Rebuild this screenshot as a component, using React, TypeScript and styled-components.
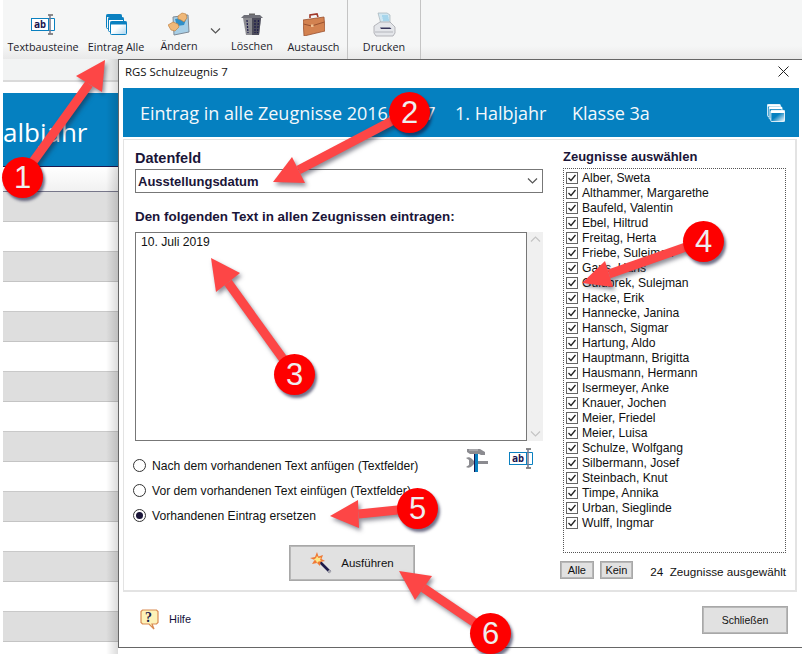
import React from 'react'
import styled, { createGlobalStyle } from 'styled-components'

const GlobalStyle = createGlobalStyle`
	html, body { margin: 0; padding: 0; background: #fff; }
	* { box-sizing: border-box; }
`

const Page = styled.div`
	position: relative;
	width: 802px;
	height: 654px;
	overflow: hidden;
	display: flex;
	flex-direction: column;
	background: #fff;
	color: #111;
	font-family: 'Liberation Sans', Arial, sans-serif;
	font-size: 12.15px;
`

/* toolbar */
const Toolbar = styled.div`
	height: 59px;
	margin-left: 3px;
	flex: none;
	display: flex;
	padding-left: 3px;
	background: linear-gradient(#f5f6f6 0, #f5f6f6 46px, #e9e9e9 59px);
`
const Tool = styled.div<{ $w: number; $sep?: boolean }>`
	width: ${p => p.$w}px;
	flex: none;
	display: flex;
	flex-direction: column;
	align-items: center;
	padding-top: 11px;
	border-right: ${p => (p.$sep ? '1px solid #c4c4c4' : 'none')};
`
const ToolIcon = styled.div`
	height: 26px;
	display: flex;
	align-items: center;
	justify-content: center;
`
const ToolLabel = styled.div<{ $up?: boolean }>`
	margin-top: ${p => (p.$up ? '2px' : '3px')};
	font-family: 'Open Sans', 'Noto Sans', sans-serif;
	font-size: 10.8px;
	line-height: 14px;
	color: #1c1c2a;
	white-space: nowrap;
`
const DropArrow = styled.div`
	width: 18px;
	flex: none;
	display: flex;
	justify-content: center;
	padding-top: 28px;
`

/* main area */
const Body = styled.div`
	flex: 1;
	display: flex;
	min-height: 0;
`

/* window behind the dialog */
const BackPane = styled.div`
	position: relative;
	width: 118px;
	flex: none;
	padding-left: 3px;
	overflow: hidden;
	background: #fff;
	&::after {
		content: '';
		position: absolute;
		top: 0;
		bottom: 0;
		right: 0;
		width: 12px;
		background: linear-gradient(to right, rgba(0, 0, 0, 0), rgba(0, 0, 0, 0.14));
	}
`
const BackTop = styled.div`
	height: 23px;
	background: #f2f3f3;
	border-bottom: 2px solid #dadada;
`
const BackGap = styled.div`
	height: 11px;
	background: #fff;
`
const BackBand = styled.div`
	height: 74px;
	overflow: hidden;
	background: #0580c0;
	border-bottom: 1px solid #1b1850;
	color: #fff;
	font-family: 'Open Sans', 'Noto Sans', sans-serif;
	font-size: 26px;
	line-height: 78px;
	white-space: nowrap;
`
const BackHeadRow = styled.div`
	height: 25px;
	background: linear-gradient(#fff, #f1f1f1);
	border-bottom: 1px solid #77778a;
`
const BackRow = styled.div<{ $grey: boolean }>`
	height: 30px;
	background: ${p => (p.$grey ? '#dedede' : '#fff')};
	border-bottom: 1px solid ${p => (p.$grey ? '#c4c4c4' : '#c9c9c9')};
`

/* dialog */
const Dialog = styled.div`
	flex: 1;
	min-width: 0;
	height: 589px;
	background: #fff;
	border-left: 1px solid #666;
	border-top: 1px solid #666;
	border-bottom: 1px solid #666;
	padding: 0 3px 0 4px;
	display: flex;
	flex-direction: column;
`
const TitleBar = styled.div`
	height: 28px;
	flex: none;
	display: flex;
	align-items: center;
	justify-content: space-between;
	padding: 0 10px 5px 2px;
	font-family: 'Open Sans', 'Noto Sans', sans-serif;
	font-size: 11.4px;
	color: #111;
`
const HeaderBand = styled.div`
	height: 49px;
	flex: none;
	display: flex;
	align-items: center;
	padding: 0 14px 0 17px;
	background: #0580c0;
	color: #f4f8fb;
	font-family: 'Open Sans', 'Noto Sans', sans-serif;
	font-size: 18px;
	white-space: nowrap;
`
const HeaderText = styled.span<{ $w: number }>`
	width: ${p => p.$w}px;
	flex: none;
`
const HeaderIcon = styled.div`
	margin-left: auto;
	display: flex;
`
const Panel = styled.div`
	height: 453px;
	flex: none;
	margin: 2px 2px 0 0;
	border: 1px solid #e3e3e3;
	border-width: 1px 2px 2px 1px;
	padding: 10px 9px 0 11px;
	display: flex;
	gap: 20px;
`
const LeftCol = styled.div`
	width: 408px;
	flex: none;
	display: flex;
	flex-direction: column;
`
const RightCol = styled.div`
	flex: 1;
	min-width: 0;
	display: flex;
	flex-direction: column;
`
const FieldLabel = styled.div<{ $size: number; $mt?: number }>`
	margin-top: ${p => p.$mt ?? 0}px;
	font-size: ${p => p.$size}px;
	font-weight: 700;
	line-height: 16px;
	color: #1a1538;
	white-space: nowrap;
`
const Combo = styled.div`
	height: 24px;
	margin-top: 3px;
	display: flex;
	align-items: center;
	justify-content: space-between;
	padding: 0 4px 0 2px;
	border: 1px solid #777;
	font-size: 13px;
	font-weight: 700;
	color: #1a1538;
`
const TextBlock = styled.div`
	margin-top: 7px;
	height: 209px;
	display: flex;
`
const TextArea = styled.div`
	flex: 1;
	padding: 2px 5px;
	border: 1px solid #777;
	line-height: 15px;
`
const ScrollBar = styled.div`
	width: 16px;
	flex: none;
	background: #f0f0f0;
	display: flex;
	flex-direction: column;
	justify-content: space-between;
	align-items: center;
	padding: 4px 0;
`
const OptionsRow = styled.div`
	display: flex;
	justify-content: space-between;
	margin-top: 17px;
`
const Options = styled.div`
	display: flex;
	flex-direction: column;
	gap: 10px;
`
const Option = styled.div`
	display: flex;
	align-items: center;
	gap: 6px;
	height: 15px;
	margin-left: -2px;
	white-space: nowrap;
`
const RadioDot = styled.span<{ $on?: boolean }>`
	width: 13px;
	height: 13px;
	flex: none;
	border-radius: 50%;
	border: 1px solid #333;
	background: #fff;
	display: flex;
	align-items: center;
	justify-content: center;
	&::after {
		content: '';
		width: 7px;
		height: 7px;
		border-radius: 50%;
		background: ${p => (p.$on ? '#1a1538' : 'transparent')};
	}
`
const SideIcons = styled.div`
	display: flex;
	align-items: flex-start;
	gap: 20px;
	margin: -10px 9px 0 0;
`
const RunRow = styled.div`
	display: flex;
	justify-content: center;
	margin-top: 22px;
	padding-left: 26px;
`
const GreyButton = styled.button<{ $w: number; $h: number; $fs: number }>`
	width: ${p => p.$w}px;
	height: ${p => p.$h}px;
	padding: 0;
	border: 1px solid #a8a8a8;
	box-shadow: inset 0 0 0 1px #b8b8b8;
	background: #e1e1e1;
	color: #111;
	font-family: inherit;
	font-size: ${p => p.$fs}px;
	display: flex;
	align-items: center;
	justify-content: center;
	gap: 9px;
`
const ListBox = styled.div`
	margin-top: 3px;
	height: 385px;
	padding: 1px 2px;
	border: 1px dotted #555;
	display: flex;
	flex-direction: column;
`
const ListRow = styled.div`
	height: 15px;
	display: flex;
	align-items: center;
	gap: 4px;
	white-space: nowrap;
`
const CheckBox = styled.span`
	width: 12px;
	height: 12px;
	flex: none;
	border: 1px solid #666;
	background: #fff;
	display: flex;
`
const ListFooter = styled.div`
	margin-top: 8px;
	display: flex;
	align-items: center;
	margin-left: -3px;
	gap: 6px;
`
const CountText = styled.span`
	margin-left: 11px;
	margin-top: 2px;
	font-size: 11.7px;
	white-space: pre;
`
const Footer = styled.div`
	flex: 1;
	display: flex;
	align-items: center;
	justify-content: space-between;
	padding: 0 11px 0 17px;
`
const HelpLink = styled.div`
	display: flex;
	align-items: center;
	gap: 10px;
	font-size: 11px;
	color: #14123a;
	padding-bottom: 1px;
`

/* screenshot annotations on top of everything */
const Overlay = styled.svg`
	position: absolute;
	inset: 0;
	width: 802px;
	height: 654px;
	pointer-events: none;
	filter: drop-shadow(2px 3px 2px rgba(30, 30, 50, 0.5));
`
const Marker = styled.div<{ $x: number; $y: number }>`
	position: absolute;
	left: ${p => p.$x - 20}px;
	top: ${p => p.$y - 20}px;
	width: 41px;
	height: 41px;
	border-radius: 50%;
	background: #fe0000;
	box-shadow: 2px 3px 3px rgba(20, 20, 60, 0.6);
	color: #eee;
	font-size: 31px;
	line-height: 41px;
	text-align: center;
`

const AbIcon = () => (
	<svg width="25" height="21" viewBox="0 0 25 21">
		<path d="M18 4.5h5.5v12H18" fill="#fff" stroke="#0a80c0" />
		<path d="M17 1h5M17 20h5" stroke="#8a8a8a" strokeWidth="2" />
		<path d="M19 1v19" stroke="#77778a" strokeWidth="1.5" />
		<rect x="0.5" y="4.5" width="17" height="12" fill="#fff" stroke="#0a80c0" />
		<text x="3" y="14" fontFamily="'DejaVu Sans Mono', monospace" fontWeight="700" fontSize="10" fill="#1a1550">ab</text>
	</svg>
)

const StackIcon = ({ line = '#0a80c0', inner = '#fff', size = 21 }: { line?: string; inner?: string; size?: number }) => (
	<svg width={size} height={size} viewBox="0 0 21 21">
		<defs>
			<linearGradient id={`f${size}`} x1="0" y1="0" x2="1" y2="1">
				<stop offset="0.45" stopColor={inner === '#fff' ? '#fff' : '#0580c0'} />
				<stop offset="1" stopColor={inner === '#fff' ? '#a8d4ee' : '#fff'} />
			</linearGradient>
		</defs>
		<rect x="0.5" y="0.5" width="15" height="14" rx="1" fill="none" stroke={line} />
		<rect x="0.5" y="0.5" width="15" height="2.5" fill={line} />
		<rect x="2.5" y="3.5" width="15" height="14" rx="1" fill={inner} stroke={line} />
		<rect x="2.5" y="3.5" width="15" height="2.5" fill={line} />
		<rect x="4.5" y="7.5" width="16" height="13" rx="1" fill={`url(#f${size})`} stroke={line} />
		<rect x="4.5" y="7.5" width="16" height="3" fill={line} />
	</svg>
)

const EditIcon = () => (
	<svg width="22" height="24" viewBox="0 0 22 24">
		<path d="M5 5L20 3l1 17-15 3z" fill="#a8cfe6" stroke="#7e8a96" />
		<path d="M7 7l12-2-3 8-7 1z" fill="#2f8fc8" />
		<path d="M10 4l4-3 4 1 1 4-3 4-3-2-3-1z" fill="#f0b878" stroke="#b87838" strokeWidth="0.6" />
		<path d="M0 13l5-3 5 2 1 3-4 4-4-1z" fill="#f0b878" stroke="#b87838" strokeWidth="0.6" />
	</svg>
)

const TrashIcon = () => (
	<svg width="22" height="24" viewBox="0 0 22 24">
		<path d="M8 2.5h6" stroke="#666" strokeWidth="2" fill="none" />
		<path d="M0 6L3 3h16l3 3z" fill="#6f7078" />
		<path d="M2 6h18l-2 17H5z" fill="#8b8b90" />
		<path d="M11 6h9l-2 17h-7z" fill="#4c4c5a" />
		<path d="M6 8l1 13M14 8v13M17.5 8l-1 13" stroke="#1c1a4a" strokeWidth="1.2" strokeDasharray="2 1" />
	</svg>
)

const CaseIcon = () => (
	<svg width="22" height="23" viewBox="0 0 22 23">
		<path d="M7 5V2l7-1 1 3" fill="none" stroke="#a0392a" strokeWidth="1.6" />
		<path d="M0 7l21-3 1 14-21 5z" fill="#d38250" stroke="#9a5230" strokeWidth="0.8" />
		<path d="M0.5 11l8 2 13-4" fill="none" stroke="#9a5230" />
		<rect x="8" y="11.5" width="2.5" height="2.5" fill="#f0c090" />
	</svg>
)

const PrinterIcon = () => (
	<svg width="23" height="25" viewBox="0 0 23 25">
		<path d="M5 1h9l3 2v9H8z" fill="#cfe7f2" stroke="#a6b2b8" strokeWidth="0.7" />
		<path d="M9 4h6M9.5 6h6M10 8h6" stroke="#7cc4e6" />
		<path d="M1 14l6-4h10l5 5v6l-2 3H3l-2-3z" fill="#e4e6ea" stroke="#a4a6ac" strokeWidth="0.8" />
		<path d="M7 15.500h10l1.500 1.500H8z" fill="#34345a" />
		<path d="M2 20h18" stroke="#b4b6bc" />
	</svg>
)

const ToolsIcon = () => (
	<svg width="24" height="25" viewBox="0 0 24 25">
		<path d="M2 1h13l5 3v3h-4l-2-1H5L2 4z" fill="#8b8b90" />
		<path d="M4 2h9" stroke="#c4c4c8" />
		<path d="M1 10c2-1 4-1 6 1l2 2h14v3H9l-2 2c-2 2-4 2-6 1l3-2v-5z" fill="#8b8b90" />
		<path d="M9 6h4v18H9z" fill="#0a80c0" />
		<path d="M9 6h1v18H9z" fill="#1a1550" />
	</svg>
)

const WandIcon = () => (
	<svg width="22" height="22" viewBox="0 0 22 22">
		<path d="M9 9l11 11" stroke="#1c1a4a" strokeWidth="2.6" />
		<path d="M18.5 18.5l2 2" stroke="#a8a8b0" strokeWidth="2.6" />
		<path d="M7 0l1.500 4.500L13 3l-1.500 4L15 9l-4.500 1L10 14 7 11l-5 1 2.500-4L0 6l5-1z" fill="#ef7a36" />
		<path d="M7 4l1.500 2 2.500-.5-1 2.500 1.500 1-3 .5L7 11 6 8.500 3.500 8 6 6z" fill="#fde98a" />
	</svg>
)

const HelpIcon = () => (
	<svg width="19" height="21" viewBox="0 0 19 21">
		<path d="M2.500 1h14l1.500 1.500v11l-1.500 1.500H12l2 5-5-5H2.500L1 13.500v-11z" fill="#fdf2b8" stroke="#d98b52" strokeWidth="1.200" />
		<text x="5" y="12.500" fontFamily="'Liberation Serif', serif" fontWeight="700" fontSize="14" fill="#1c1a4a">?</text>
	</svg>
)

const Chevron = ({ up, color = '#555' }: { up?: boolean; color?: string }) => (
	<svg width="11" height="6" viewBox="0 0 11 6">
		<path d={up ? 'M1 5.500l4.500-4.500 4.500 4.500' : 'M1 .5l4.500 4.500 4.500-4.500'} fill="none" stroke={color} strokeWidth="1.200" />
	</svg>
)

const Check = () => (
	<svg width="10" height="10" viewBox="0 0 10 10">
		<path d="M1.500 5l2.500 2.500 4.500-5.500" fill="none" stroke="#222" strokeWidth="1.300" />
	</svg>
)

const CloseX = () => (
	<svg width="11" height="11" viewBox="0 0 11 11">
		<path d="M.5 .5l10 10M10.500 .5l-10 10" stroke="#222" strokeWidth="1" />
	</svg>
)

const names = [
	'Alber, Sweta', 'Althammer, Margarethe', 'Baufeld, Valentin', 'Ebel, Hiltrud', 'Freitag, Herta',
	'Friebe, Suleiman', 'Gans, Hans', 'Gülübrek, Sulejman', 'Hacke, Erik', 'Hannecke, Janina',
	'Hansch, Sigmar', 'Hartung, Aldo', 'Hauptmann, Brigitta', 'Hausmann, Hermann', 'Isermeyer, Anke',
	'Knauer, Jochen', 'Meier, Friedel', 'Meier, Luisa', 'Schulze, Wolfgang', 'Silbermann, Josef',
	'Steinbach, Knut', 'Timpe, Annika', 'Urban, Sieglinde', 'Wulff, Ingmar',
]

type Pt = [number, number]
interface Note {
	n: number
	at: Pt
	tip: Pt
	a: Pt
	b: Pt
}

const notes: Note[] = [
	{ n: 1, at: [22, 177], tip: [105, 60], a: [76, 76], b: [102, 92] },
	{ n: 2, at: [409, 112], tip: [273, 182], a: [292, 157], b: [305, 183] },
	{ n: 3, at: [294, 374], tip: [211, 258], a: [240, 273], b: [216, 292] },
	{ n: 4, at: [703, 241], tip: [582, 283], a: [605, 261], b: [613, 287] },
	{ n: 5, at: [417, 508], tip: [330, 516], a: [358, 500], b: [359, 528] },
	{ n: 6, at: [490, 633], tip: [399, 571], a: [432, 576], b: [415, 600] },
]

const Arrow = ({ note }: { note: Note }) => {
	const { at, tip, a, b } = note
	const mx = (a[0] + b[0]) / 2
	const my = (a[1] + b[1]) / 2
	return (
		<g>
			<line x1={mx} y1={my} x2={at[0]} y2={at[1]} stroke="#fd4646" strokeWidth="9" />
			<polygon points={[tip, a, b].map(p => p.join(',')).join(' ')} fill="#fd4646" />
		</g>
	)
}

const App: React.FC = () => {
	return (
		<Page>
			<GlobalStyle />
			<Toolbar>
				<Tool $w={74}>
					<ToolIcon><AbIcon /></ToolIcon>
					<ToolLabel>Textbausteine</ToolLabel>
				</Tool>
				<Tool $w={72}>
					<ToolIcon><StackIcon /></ToolIcon>
					<ToolLabel>Eintrag Alle</ToolLabel>
				</Tool>
				<Tool $w={54}>
					<ToolIcon><EditIcon /></ToolIcon>
					<ToolLabel $up>Ändern</ToolLabel>
				</Tool>
				<DropArrow><Chevron /></DropArrow>
				<Tool $w={56}>
					<ToolIcon><TrashIcon /></ToolIcon>
					<ToolLabel $up>Löschen</ToolLabel>
				</Tool>
				<Tool $w={68} $sep>
					<ToolIcon><CaseIcon /></ToolIcon>
					<ToolLabel>Austausch</ToolLabel>
				</Tool>
				<Tool $w={73} $sep>
					<ToolIcon><PrinterIcon /></ToolIcon>
					<ToolLabel>Drucken</ToolLabel>
				</Tool>
			</Toolbar>
			<Body>
				<BackPane>
					<BackTop />
					<BackGap />
					<BackBand>albjahr</BackBand>
					<BackHeadRow />
					{Array.from({ length: 15 }, (_, i) => (
						<BackRow key={i} $grey={i % 2 === 0} />
					))}
				</BackPane>
				<Dialog>
					<TitleBar>
						<span>RGS Schulzeugnis 7</span>
						<CloseX />
					</TitleBar>
					<HeaderBand>
						<HeaderText $w={315}>Eintrag in alle Zeugnisse 2016/2017</HeaderText>
						<HeaderText $w={117}>1. Halbjahr</HeaderText>
						<HeaderText $w={90}>Klasse 3a</HeaderText>
						<HeaderIcon><StackIcon line="#fff" inner="#0580c0" size={18} /></HeaderIcon>
					</HeaderBand>
					<Panel>
						<LeftCol>
							<FieldLabel $size={14.5}>Datenfeld</FieldLabel>
							<Combo>
								<span>Ausstellungsdatum</span>
								<Chevron />
							</Combo>
							<FieldLabel $size={13.4} $mt={16}>Den folgenden Text in allen Zeugnissen eintragen:</FieldLabel>
							<TextBlock>
								<TextArea>10. Juli 2019</TextArea>
								<ScrollBar>
									<Chevron up color="#c4c4c4" />
									<Chevron color="#c4c4c4" />
								</ScrollBar>
							</TextBlock>
							<OptionsRow>
								<Options>
									<Option><RadioDot />Nach dem vorhandenen Text anfügen (Textfelder)</Option>
									<Option><RadioDot />Vor dem vorhandenen Text einfügen (Textfelder)</Option>
									<Option><RadioDot $on />Vorhandenen Eintrag ersetzen</Option>
								</Options>
								<SideIcons>
									<ToolsIcon />
									<AbIcon />
								</SideIcons>
							</OptionsRow>
							<RunRow>
								<GreyButton $w={126} $h={36} $fs={11.5}>
									<WandIcon />
									Ausführen
								</GreyButton>
							</RunRow>
						</LeftCol>
						<RightCol>
							<FieldLabel $size={13} $mt={-1}>Zeugnisse auswählen</FieldLabel>
							<ListBox>
								{names.map(name => (
									<ListRow key={name}>
										<CheckBox><Check /></CheckBox>
										{name}
									</ListRow>
								))}
							</ListBox>
							<ListFooter>
								<GreyButton $w={34} $h={18} $fs={11}>Alle</GreyButton>
								<GreyButton $w={34} $h={18} $fs={11}>Kein</GreyButton>
								<CountText>24  Zeugnisse ausgewählt</CountText>
							</ListFooter>
						</RightCol>
					</Panel>
					<Footer>
						<HelpLink>
							<HelpIcon />
							Hilfe
						</HelpLink>
						<GreyButton $w={86} $h={28} $fs={10.5}>Schließen</GreyButton>
					</Footer>
				</Dialog>
			</Body>
			<Overlay viewBox="0 0 802 654">
				{notes.map(note => (
					<Arrow key={note.n} note={note} />
				))}
			</Overlay>
			{notes.map(note => (
				<Marker key={note.n} $x={note.at[0]} $y={note.at[1]}>{note.n}</Marker>
			))}
		</Page>
	)
}

export default App
